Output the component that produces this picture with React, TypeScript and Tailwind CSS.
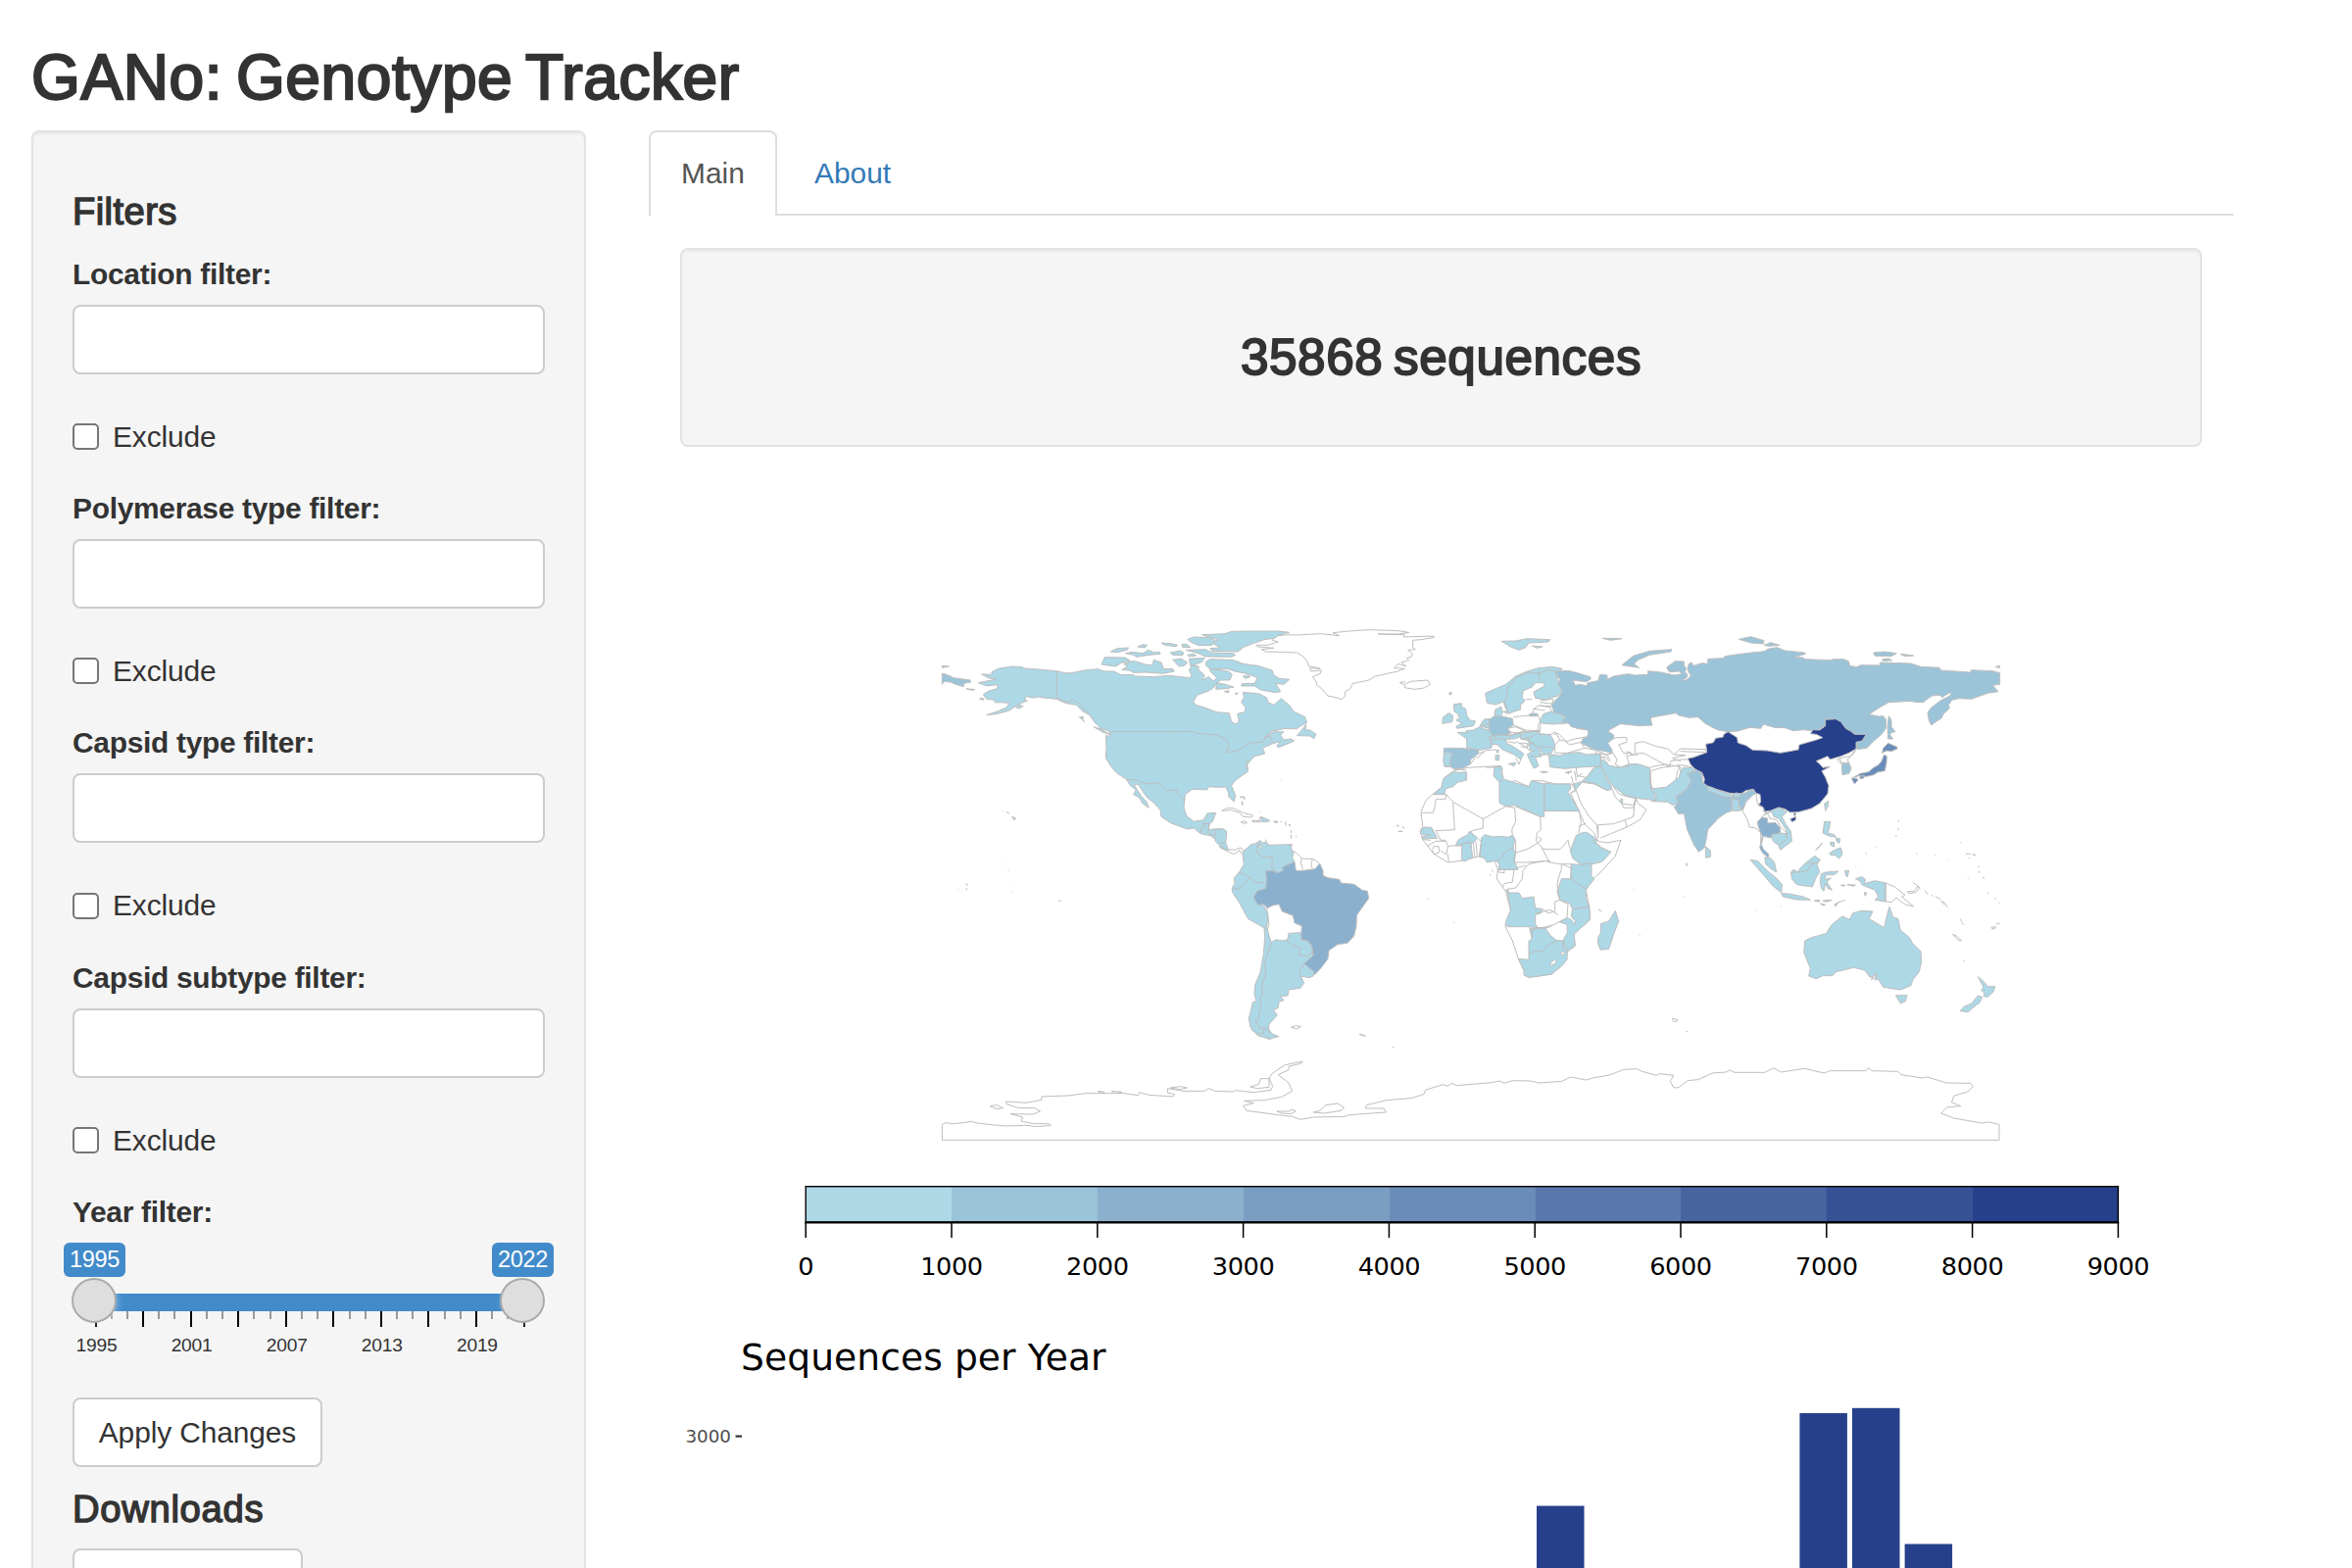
const L = "#add8e6";
const R = "#9cc4d9";
const B = "#8bb0ce";
const J = "#6a8cb9";
const C = "#27408b";
const W = "#ffffff";

type Shape = [fill: string, points: string];
type Region = { transform: string; shapes: Shape[]; lines: string[] };

const northAmerica: Region = {
  transform: "translate(940 620) scale(0.33333)",
  shapes: [
    [L, "415,194 345,188 315,186 310,182 278,180 235,187 215,198 218,205 185,204 205,215 228,220 200,225 175,230 200,240 235,236 232,248 205,256 190,266 200,280 225,283 226,291 245,290 260,292 270,290 262,305 235,317 200,329 235,325 270,315 295,298 312,290 325,285 317,283 322,270 332,275 350,276 358,273 375,276 415,280 440,292 475,298 495,318 515,328 530,350 550,370 575,378 580,394 565,392 567,430 565,460 580,485 600,508 628,525 640,545 658,558 650,572 668,582 678,600 697,613 690,595 675,578 662,560 652,540 665,542 690,580 715,600 732,620 735,640 765,660 815,678 835,675 855,692 885,698 900,708 913,720 915,735 937,745 937,735 930,722 934,685 918,677 905,677 880,680 882,662 892,655 902,628 875,630 865,650 835,655 812,638 804,612 808,572 830,556 875,558 880,548 905,550 932,549 940,565 942,580 958,594 962,575 950,545 960,530 1000,502 998,480 1020,455 1052,447 1045,430 1080,415 1100,410 1088,424 1095,428 1142,408 1132,402 1110,405 1100,390 1110,380 1080,380 1048,400 1075,378 1110,371 1150,371 1165,360 1181,352 1175,335 1155,325 1140,318 1128,300 1102,278 1080,298 1062,290 1058,276 1035,264 985,259 988,275 980,290 993,305 990,320 968,325 973,345 966,357 950,350 943,323 905,320 870,307 840,298 833,287 845,268 880,255 895,245 905,230 918,222 945,222 952,205 940,195 905,190 885,185 885,195 905,215 895,225 880,212 860,222 868,207 848,190 850,180 830,178 820,190 828,210 820,215 760,208 710,212 655,210 650,206 610,205 590,195 560,195 540,188 500,192 460,200 440,200"],
    [L, "872,165 885,158 955,160 985,172 1030,178 1075,192 1078,205 1095,217 1127,220 1110,235 1085,232 1100,257 1085,260 1040,252 1020,240 980,240 982,233 1020,232 1030,215 1000,203 960,195 940,188 885,188 872,178"],
    [L, "620,172 650,163 690,175 708,175 712,160 735,168 742,188 770,187 775,195 740,202 690,198 650,199 640,193 615,190 632,180"],
    [L, "562,152 625,153 640,163 615,168 595,180 552,174"],
    [L, "580,135 600,125 635,123 630,130 600,137"],
    [L, "625,140 645,136 680,140 695,130 712,137 730,136 732,142 690,146 660,151 650,145"],
    [L, "662,120 678,113 692,115 685,123"],
    [L, "735,108 765,110 785,115 780,119 745,115"],
    [L, "762,138 795,132 803,138 800,146 770,145"],
    [L, "770,160 795,156 815,168 805,178 790,180"],
    [L, "820,157 868,154 860,166 825,180"],
    [L, "798,112 812,112 824,122 800,121"],
    [L, "810,130 870,128 890,138 955,140 962,145 950,151 870,150 848,140"],
    [L, "815,145 832,142 842,147 820,150"],
    [L, "860,83 930,80 950,73 1000,72 1095,72 1127,76 1095,84 1082,94 1050,98 1020,108 985,122 970,135 890,133 885,125 915,123 890,107 912,98 880,90"],
    [L, "815,97 835,90 880,92 900,100 890,115 850,116 830,108"],
    [L, "905,230 930,235 957,243 935,248 902,250"],
    [L, "985,210 1000,207 1008,212 992,217"],
    [L, "928,257 943,254 940,261"],
    [L, "960,262 970,262 964,266"],
    [L, "1178,357 1165,375 1150,392 1190,393 1202,401 1209,388 1190,375 1176,374"],
    [L, "528,365 550,372 580,390 555,381"],
    [L, "484,335 497,335 494,342 500,350"],
    [L, "290,305 300,298 312,302 300,309"],
    [L, "178,279 190,278 192,283"],
    [L, "138,248 165,251 155,253"],
    [R, "64,201 85,208 100,215 150,222 152,228 130,232 130,242 105,235 90,228 70,226 64,235"],
    [R, "64,178 85,180 64,184"],
    [L, "278,640 290,645 284,650"],
    [L, "1040,640 1068,652 1058,656 1042,655"],
    [L, "1080,654 1092,655 1085,659"],
    [W, "920,622 935,614 955,614 985,628 1015,636 1012,642 985,640 975,628 950,620"],
    [W, "978,656 990,654 998,658 988,662"],
    [W, "1012,653 1035,652 1038,656 1020,657"],
  ],
  lines: [
    "415,194 415,280",
    "415,278 450,290 465,282 480,290 500,310 515,330",
    "580,380 825,379 850,385 885,388 905,390 935,405 942,420 935,443 965,440 985,428 1010,413 1045,412 1055,398 1068,393 1075,413",
    "628,527 655,527 690,540 725,537 755,560 780,557 790,575 808,587",
    "855,690 858,674 870,672 862,662 882,660",
    "882,662 878,690 892,697 908,692 930,685",
    "912,720 930,722",
    "247,621 249,623", "260,626 270,630", "1035,625 1037,626", "978,578 990,580 990,586", "982,592 985,605",
    "1100,530 1102,530", "1115,655 1118,658", "1125,662 1128,668", "1132,680 1132,690", "1147,701 1149,702",
    "250,785 252,786", "267,802 269,804", "136,845 144,850", "112,862 114,863", "135,862 142,861", "289,857 290,858", "280,871 282,872", "420,898 428,898",
    "1001,467 995,480 1000,495",
  ],
};

const greenland: Region = {
  transform: "translate(1260 630) scale(0.33333)",
  shapes: [
    [W, "120,57 165,53 190,54 262,50 320,56 300,47 350,42 410,38 500,41 533,46 500,51 438,51 520,53 517,60 610,57 610,61 570,68 545,70 545,92 553,98 530,100 545,112 540,121 527,124 533,131 510,138 525,150 500,142 488,155 520,157 495,166 430,180 410,192 360,203 353,220 338,227 338,240 328,251 312,246 285,240 265,217 250,207 250,198 238,182 262,172 265,162 232,165 230,155 262,157 225,148 222,135 210,120 190,108 145,106 95,105 82,98 120,94 70,90 65,85 100,85 133,75 115,70"],
    [W, "505,200 518,196 525,203 540,196 590,192 598,205 580,216 550,220 520,215 522,207"],
    [L, "672,266 690,264 690,270 672,270"],
    [R, "656,231 664,230 660,238"],
  ],
  lines: [],
};

const southAmerica: Region = {
  transform: "translate(1240 800) scale(0.33333)",
  shapes: [
    [L, "85,225 85,207 110,185 125,182 137,172 145,180 155,178 165,187 235,185 232,195 240,210 236,225 243,240 220,262 175,290 160,300 155,325 125,345 150,375 162,400 158,442 145,438 100,412 75,365 52,330 52,317 60,305 58,288 75,268 88,245"],
    [B, "155,267 175,265 190,272 208,265 205,255 243,238 247,265 270,265 306,260 320,243 330,265 330,280 345,287 380,292 385,303 425,307 450,325 466,328 470,350 450,378 433,402 432,435 425,465 405,487 375,491 348,510 345,535 325,562 305,583 270,550 300,525 295,495 280,480 262,475 265,435 243,425 238,403 205,390 195,368 175,372 160,380 148,368 130,370 118,348 128,328 155,320 157,290"],
    [L, "150,440 160,445 165,465 172,485 185,476 205,480 222,476 225,457 262,455 265,478 283,480 295,495 300,525 272,550 285,560 303,575 300,588 288,593 262,588 272,610 260,625 225,630 222,648 200,650 210,662 195,667 193,685 178,692 190,708 165,735 163,750 175,765 195,773 165,780 130,770 108,745 103,718 108,698 115,668 125,665 120,640 122,615 137,580 141,560 148,520 152,470"],
    [L, "0,140 25,137 35,145 32,180 38,195 38,205 15,190 0,175"],
    [W, "232,745 245,740 263,742 250,749"],
    [W, "442,766 452,768 460,772 448,769"],
    [W, "136,186 143,188 141,198 136,196"],
  ],
  lines: [
    "172,485 165,510 152,545 155,580 142,620 145,640 138,660 140,680 130,725 122,727 135,745 165,752 165,765",
    "110,752 125,762 148,765 150,750",
    "215,478 240,495 263,503 255,523 280,527 298,515",
    "272,550 260,570 258,590",
    "158,380 165,430 160,445",
    "135,175 125,200 130,213 145,222 175,225 173,255 190,272",
    "70,270 85,275 105,285 95,300 70,322 55,318",
    "105,285 125,300 152,303",
    "238,205 250,212 265,228 300,230 318,242",
    "265,228 262,240 268,262", "298,230 294,245 298,262",
    "38,200 60,202 78,195 88,207", "38,206 58,215 75,203 83,216", "12,180 28,182",
    "137,101 137,118", "75,41 90,42 89,48", "80,55 84,65", "178,115 192,118", "200,115 204,116", "213,118 217,128", "228,123 230,130", "233,155 232,168", "246,161 249,162", "226,187 234,188", "152,170 158,176",
    "555,126 562,129", "575,130 578,136", "562,145 573,144", "652,351 654,352", "730,423 732,424", "545,805 546,806",
    "840,278 844,279", "848,265 850,268", "163,188 155,176",
  ],
};

const africaEurope: Region = {
  transform: "translate(1400 620) scale(0.33333)",
  shapes: [
    [W, "250,500 290,490 340,487 395,485 400,510 393,530 415,535 440,530 480,548 490,530 520,530 560,540 612,540 622,557 608,568 635,625 650,662 680,690 692,715 720,720 762,712 745,760 705,805 672,835 655,865 665,915 668,955 640,980 618,1000 622,1035 598,1055 585,1090 550,1122 480,1132 465,1110 448,1075 430,1020 408,975 425,930 410,870 382,830 385,800 375,775 345,765 325,762 275,775 232,780 190,755 155,710 147,685 155,670 150,625 165,590 188,570 215,548 222,520"],
    [L, "248,503 265,505 287,503 290,528 262,535 248,548 225,555 222,570 187,571 212,552 218,525"],
    [L, "375,488 395,485 400,495 393,505 403,520 390,535 385,530 372,515"],
    [L, "390,535 403,525 440,537 480,548 488,530 527,540 527,640 515,640 438,605 410,608 390,598"],
    [L, "527,538 560,540 608,540 608,555 600,565 635,623 527,622"],
    [L, "147,688 158,672 182,673 200,706 155,708 155,700 180,697 155,695"],
    [L, "256,728 265,710 290,697 300,685 323,705 310,720 280,722 275,728"],
    [L, "275,722 303,720 308,765 285,776 275,773"],
    [L, "335,705 345,695 370,702 395,700 415,703 430,697 437,712 432,735 438,750 435,775 447,802 388,802 390,785 380,775 352,780 345,768 330,762"],
    [L, "625,697 640,690 658,688 683,705 683,718 700,735 732,748 705,778 675,785 640,787 615,768 607,745"],
    [L, "610,785 640,787 672,782 672,820 680,832 655,862 608,830"],
    [L, "580,830 610,830 655,862 655,890 665,915 615,925 605,905 575,895 567,870"],
    [L, "613,925 665,915 668,955 640,980 618,1000 622,1035 598,1050 590,1035 585,1018 598,995 597,970 573,962 598,950 610,955 620,970 623,960 610,945"],
    [L, "415,873 450,873 460,890 495,885 500,920 520,922 518,935 500,940 500,968 508,980 475,977 430,977 408,972 412,955 425,925"],
    [L, "411,865 417,862 418,873 412,870"],
    [L, "483,985 530,980 545,1003 565,1018 585,1020 598,1050 597,1078 580,1098 550,1122 520,1127 480,1132 465,1125 465,1110 448,1075 480,1078 480,1020 490,1015"],
    [W, "545,1088 560,1078 565,1085 550,1096"],
    [W, "578,1056 588,1052 590,1062 580,1063"],
    [L, "745,928 755,960 740,1000 725,1045 700,1048 692,1030 692,1010 700,995 700,968 725,960"],
    [L, "677,712 683,708 690,712 683,722"],
    // Scandinavia
    [L, "397,103 440,102 475,95 545,98 540,105 480,108 470,122 450,130 425,120"],
    [L, "490,117 522,120 505,124"],
    [R, "706,94 765,95 730,100"],
    [L, "347,262 375,250 410,235 440,210 475,195 510,185 550,181 582,187 575,198 565,200 568,220 573,235 583,255 570,270 530,282 500,277 495,258 528,240 525,230 500,230 490,243 462,255 460,275 468,285 455,298 455,312 435,318 418,325 408,305 402,288 380,297 352,292"],
    [L, "375,325 378,312 395,303 400,322 392,335 378,335"],
    [L, "402,318 415,318 413,325"],
    // British Isles
    [L, "250,297 275,293 273,303 287,310 290,330 300,345 317,348 310,362 260,370 258,363 277,355 258,345 268,337 262,325 252,318"],
    [L, "218,335 235,323 248,330 245,350 215,355"],
    // Iberia, France, Central Europe
    [R, "220,430 270,430 327,436 325,447 302,465 300,480 280,490 252,495 240,487 222,487 220,462"],
    [L, "222,442 245,445 240,465 240,487 222,485 218,468"],
    [L, "262,382 290,382 288,377 310,375 330,365 345,372 368,378 370,392 358,400 368,420 365,430 330,436 290,430 290,402"],
    [L, "330,362 343,342 365,340 358,370"],
    [R, "358,345 372,333 395,332 430,340 433,360 415,370 425,385 405,392 370,392 358,375"],
    [R, "480,328 490,323 508,325 505,332 482,332"],
    [L, "360,395 385,390 425,392 440,383 455,385 455,395 435,402 410,403 412,415 440,430 465,448 455,465 435,450 400,435 385,420 368,418 362,405"],
    [L, "418,478 440,475 435,485"],
    [L, "378,452 390,452 388,468 378,467"],
    [L, "380,437 388,436 385,446"],
    [L, "455,385 500,378 515,375 510,388 545,388 555,405 560,422 550,445 525,450 512,430 500,430 480,420 480,407 455,402"],
    [L, "478,420 495,415 510,432 520,455 500,458 510,485 495,492 482,465 475,450 490,440"],
    [L, "515,502 538,503 525,506"],
    [R, "592,505 612,500 602,508"],
    [L, "515,345 525,325 550,318 580,325 592,345 590,355 550,357 513,353"],
    // Middle East
    [L, "542,460 550,450 575,453 600,445 635,443 655,450 700,447 700,485 650,488 625,490 590,493 545,488"],
    [L, "537,450 555,450 545,460"],
    [L, "657,520 682,488 700,485 712,495 715,520 735,550 722,560 685,540 645,532 622,560 618,540 640,533"],
    [L, "700,465 715,470 725,483 760,490 785,480 810,478 850,490 855,545 870,590 820,585 775,575 740,548 725,530 712,505 702,490"],
    [L, "762,585 768,587 765,600 760,597"],
  ],
  lines: [
    "188,572 227,572 248,595 340,647 410,608", "227,572 225,587 195,587 192,610 187,628 152,628",
    "248,597 253,680 198,683", "340,647 340,675 310,682 295,688", "410,608 437,613 440,655 428,680 430,697", "515,640 517,680 505,690 503,715",
    "515,640 438,608", "527,622 635,623", "635,625 640,658 632,690", "655,660 632,670",
    "430,697 440,712 440,750 475,740 505,722 520,710 510,702", "503,715 525,740 575,740 590,725 600,712 607,740",
    "520,735 535,765 545,780 575,785 610,785", "440,750 435,780 470,780 545,775", "545,780 530,775 480,785 462,805 460,830 440,858 415,862",
    "388,802 435,802 430,840 405,845 400,855", "388,800 388,810 405,812 405,803", "435,802 450,795 470,790",
    "580,785 580,800 570,830 567,850 575,895 560,900 560,930 540,935 520,922", "575,895 600,908 597,950 573,962", "500,937 545,925 570,940",
    "508,980 540,980 573,962", "483,985 530,978 550,972", "480,980 490,985 490,1015", "413,977 430,977",
    "480,1058 500,1052 520,1052 545,1030 570,1018", "585,1020 585,1045", "610,785 610,830", "583,785 613,800",
    "195,680 210,712 225,712 232,730 228,755 210,745", "170,730 195,715 225,715", "185,740 190,730 205,732 205,750 190,755 185,742",
    "232,730 275,728", "232,755 235,778", "310,720 315,765", "318,715 322,762", "325,708 335,715 328,762", "155,710 180,712",
    "430,735 405,750 398,765 380,775", "692,705 692,665 740,662 775,650 800,640 803,610", "775,650 780,672 700,705",
    "645,535 680,540 720,560 735,555 745,580 765,600 800,605 808,583 815,600 840,618 820,650 780,672", "740,550 755,570 780,578 808,585 803,610",
    "608,568 625,560 640,600 665,640 688,665 692,700", "765,600 770,613 800,613 808,585",
    "685,718 700,733 730,748", "527,540 527,622", "290,503 287,530",
    // Nordic and Baltic borders
    "418,322 405,288 415,270 412,250 440,215 480,198 510,202 515,222", "510,202 540,190 575,198", "512,195 515,205",
    "515,285 555,280 552,295 515,290", "550,290 555,302 515,300", "493,312 510,300 545,305 550,318", "492,320 495,310 530,315", "470,282 490,280",
    // Central European borders
    "433,335 480,330 510,332 515,350 515,378 470,375 435,360", "415,370 440,365 470,378 440,385 418,378", "440,385 460,380 510,380",
    "510,355 505,385", "590,355 615,352 625,370 662,375", "510,385 545,390 560,380 575,405", "555,388 570,385 595,410 620,402 660,395",
    "560,422 560,445 600,445 650,430 640,412 605,420 590,408 575,405 560,420", "480,405 505,428", "510,425 550,428", "475,395 485,420",
    "440,410 470,425 485,440", "450,415 475,415 475,430 455,425", "415,410 440,415", "385,400 410,405", "365,405 385,402", "370,392 380,400",
    "358,355 335,362", "412,392 455,385", "425,392 420,402", "455,402 480,400 500,388", "480,432 495,440", "510,450 535,450", "485,455 500,455",
    "288,497 250,495", "302,480 320,450 350,437 380,435", "395,487 350,490",
    "320,462 345,440", "455,465 450,480 440,460",
    // Caucasus and Levant
    "650,430 680,435 718,450 733,447", "680,440 700,455 715,465", "700,447 720,450 730,470", "700,460 715,455 725,470", "625,490 628,515 657,520 680,490",
    "620,500 625,530", "610,515 618,545", "625,520 645,508", "850,490 865,485 900,480 945,488 935,500 930,530 900,555 855,555 855,545",
    // offshore specks
    "75,668 82,669", "93,672 98,674", "80,685 94,686", "368,803 370,807", "361,817 362,819", "172,891 174,892", "250,963 251,964", "692,924 704,930", "818,1002 821,1003", "800,861 802,862", "953,885 955,886", "963,782 963,790",
  ],
};

const asia: Region = {
  transform: "translate(1640 620) scale(0.33333)",
  shapes: [
    [R, "-150,195 -118,193 -80,203 -52,212 -50,219 -65,227 -105,222 -98,238 -82,235 -62,240 -60,230 -28,224 -22,205 0,207 0,220 20,210 65,203 85,207 125,205 125,194 165,198 205,207 228,203 222,195 190,197 182,183 208,164 235,165 235,178 243,187 237,197 246,205 243,215 228,222 243,222 256,208 248,195 247,182 250,172 258,168 265,178 290,170 308,172 308,157 358,155 360,149 400,143 450,137 480,134 495,126 520,122 545,132 605,138 607,142 570,152 600,153 605,158 690,161 690,158 725,158 740,165 742,178 765,182 775,176 835,177 835,168 930,171 960,181 1018,184 1020,192 1100,197 1110,199 1115,191 1180,194 1202,200 1202,235 1180,238 1197,257 1165,262 1115,280 1078,278 1055,283 1045,298 1048,308 1030,325 1022,340 1008,348 992,360 985,345 981,322 990,308 1020,285 1045,272 1057,262 1045,262 1025,275 1020,268 995,270 975,283 970,289 945,290 930,286 862,290 835,305 802,327 830,333 845,332 853,342 853,370 840,388 820,405 795,430 765,434 762,412 780,408 793,388 757,388 745,378 728,372 715,352 700,343 670,342 667,362 650,372 640,378 600,374 570,377 540,367 515,368 478,357 470,370 437,367 400,378 368,380 340,375 325,368 300,355 278,335 250,337 220,330 210,323 170,330 133,337 135,350 138,360 100,362 60,358 40,356 15,370 2,378 20,390 20,400 2,415 15,435 13,447 -5,440 -40,435 -80,415 -75,402 -60,395 -58,375 -110,365 -120,352 -140,350 -128,338 -137,328 -162,320 -170,300 -160,285 -145,270 -137,255 -150,235 -145,220 -160,200"],
    [R, "45,176 80,148 130,133 198,128 195,135 130,145 95,160 82,172 98,184"],
    [R, "403,97 440,89 480,101 478,111 440,108"],
    [R, "480,115 500,107 528,115 495,118"],
    [R, "815,138 850,135 886,140 870,149 820,148"],
    [R, "898,142 938,147 910,149"],
    [R, "842,158 862,156 872,162 845,163"],
    [R, "1188,182 1202,178 1202,184"],
    [R, "862,332 870,345 870,365 882,380 872,382 865,388 875,402 860,402 858,365"],
    [C, "247,462 265,458 305,443 302,418 325,413 332,400 355,396 357,388 370,380 398,398 400,414 425,422 445,436 490,438 530,445 585,435 588,420 640,405 660,398 640,388 622,386 630,374 650,375 668,362 668,343 700,341 716,350 730,370 745,378 757,388 793,388 780,408 762,412 762,432 740,445 715,455 682,465 675,455 640,470 650,478 660,490 682,487 657,500 668,520 678,545 675,570 650,600 625,615 585,626 560,627 545,617 525,612 500,622 480,625 478,612 462,605 470,595 468,572 455,568 448,556 425,560 410,570 375,568 320,552 295,540 298,525 290,505 270,495 255,480"],
    [C, "560,647 578,640 577,650 566,656"],
    [C, "572,628 577,628 575,638 571,635"],
    [R, "245,508 275,498 290,508 292,535 305,545 310,558 380,582 385,570 420,568 445,556 455,568 425,590 415,620 408,612 400,595 380,600 382,622 365,628 340,645 308,680 303,710 298,735 280,748 265,725 245,680 235,630 218,632 205,610 215,600 210,578 240,560 258,530"],
    [L, "305,547 320,550 345,562 378,570 378,582 345,575 310,560"],
    [L, "385,572 395,567 410,572 405,580 388,580"],
    [L, "380,585 405,590 402,612 412,618 405,622 385,622"],
    [L, "302,732 315,745 313,765 302,763"],
    [L, "150,590 150,575 133,555 180,550 200,535 220,520 225,500 232,490 260,490 270,498 245,508 258,530 240,560 210,578 218,598 200,605 185,595 135,593"],
    [R, "718,480 740,475 747,492 740,508 720,512"],
    [J, "842,445 845,430 860,415 888,427 888,432 870,440 855,438"],
    [J, "848,450 856,455 855,475 850,500 830,503 815,512 795,517 770,515 750,522 775,508 800,503 815,490 830,482 840,470"],
    [J, "748,522 765,523 768,528 757,540"],
    [J, "772,518 787,514 785,522 775,524"],
    [L, "665,600 678,592 675,610 668,622"],
    [B, "460,655 475,642 490,645 492,660 515,658 530,675 530,690 505,695 502,705 478,700 472,725 478,740 495,755 492,765 475,750 467,735 475,700 470,690 462,668"],
    [L, "502,622 525,612 550,625 535,640 545,660 562,685 565,715 530,742 525,728 550,700 548,680 525,645 510,640"],
    [L, "502,697 525,690 550,692 548,710 525,728 508,715"],
  ],
  lines: [
    // Central Asia
    "5,405 30,398 60,398 60,412 35,420 50,445 75,445 70,452 60,455 68,485 40,488 25,480 30,465 15,440",
    "85,448 85,415 110,410 150,425 185,432 205,450 215,440 225,432 302,434", "85,448 110,445 130,455 165,475 190,487 195,470 225,465 248,465",
    "70,452 95,450", "190,487 165,490 133,500 130,530 135,553", "190,487 225,482 260,488", "205,450 240,452 210,458 200,462 225,470", "225,440 300,443",
    "218,480 225,500", "60,440 80,450", "55,452 70,440",
    "762,432 745,455 715,460 705,465 712,475 740,475 735,465 752,450 762,435", "718,480 712,460",
    // Indochina
    "408,612 430,650 435,672 455,675 470,690", "455,568 460,600 478,612 485,630 500,625", "485,630 470,645", "490,628 498,645 520,650 530,670 548,688 545,695",
    "415,620 425,595 440,580", "378,582 380,600", "300,434 302,440", "480,635 505,622", "470,690 470,720",
    // specks
    "892,650 892,656", "892,676 890,682", "882,700 884,698", "1080,718 1082,719", "823,735 825,736", "947,754 949,755", "1003,758 1005,758", "1100,754 1112,755", "1120,757 1128,758", "791,752 793,753",
  ],
};

const oceania: Region = {
  transform: "translate(1700 800) scale(0.33333)",
  shapes: [
    [L, "122,192 135,203 137,222 122,226"],
    [L, "302,225 318,225 332,240 338,270 322,260 305,245"],
    [L, "258,232 280,235 315,270 340,290 355,308 353,333 325,310 300,280"],
    [L, "353,335 375,336 420,345 442,355 400,354 358,345"],
    [L, "383,270 390,262 405,270 410,258 430,240 455,220 472,232 462,245 470,270 460,285 448,315 400,308 385,290"],
    [L, "475,275 490,270 528,267 515,278 490,278 485,292 505,288 492,300 508,325 495,320 488,303 483,328 476,320 472,300"],
    [L, "548,265 560,265 555,285 550,280"],
    [L, "535,310 548,309 545,313"], [L, "555,308 580,309 575,313"], [L, "454,357 470,355 468,361"], [L, "480,357 508,355 490,361"], [L, "472,366 488,370 480,372"], [L, "515,370 528,362 520,374"],
    [L, "580,290 600,284 610,292 608,305 640,296 672,303 672,360 640,355 650,345 640,325 615,315 600,308 595,298"],
    [L, "607,332 614,333 610,343"],
    [L, "485,115 503,115 500,135 495,150 515,155 520,163 495,158 480,150"],
    [L, "520,165 533,168 530,182 522,175"], [L, "502,178 515,178 515,192 505,188"], [L, "500,212 520,200 535,195 540,215 530,228 518,218 505,218"],
    [L, "458,203 478,180 472,190"],
    [L, "425,480 445,470 490,458 508,430 540,405 562,415 572,395 600,388 633,390 622,413 668,440 677,400 684,376 695,408 710,412 718,448 745,470 755,488 780,512 782,545 775,575 755,600 750,617 718,630 690,626 665,622 650,598 640,600 645,585 625,592 608,570 575,562 520,575 510,587 480,587 460,596 437,588 442,565 430,535 422,515"],
    [W, "628,600 642,578 640,592"],
    [L, "703,647 738,647 733,665 718,672"],
    [L, "955,590 970,602 985,620 1007,620 1003,635 985,652 972,650 975,640 965,632 972,622"],
    [L, "955,648 968,652 960,670 945,680 925,698 900,695 912,682 935,672"],
    [W, "672,303 700,315 732,340 722,345 758,375 730,368 705,348 690,362 672,360"],
    [W, "738,330 760,328 770,313 775,318 765,332 745,335"],
    [W, "877,460 890,465 905,480 895,478"],
    [W, "20,718 36,722 32,728 22,726"],
    [W, "996,438 1010,438 1005,444 998,443"],
  ],
  lines: [
    "385,270 410,270 435,265 440,250 455,242 467,242", "430,240 455,242", "757,303 770,310 778,320", "792,326 802,338", "812,340 818,343", "825,345 840,352", "840,355 852,370", "848,358 862,378",
    "900,412 905,420", "905,422 910,430", "1010,430 1022,426", "528,362 548,356", "672,303 672,360", "704,160 706,156", "612,212 614,213", "644,194 645,195", "766,213 768,214", "824,217 826,218", "866,232 868,233", "902,179 904,180", "918,213 922,214", "938,216 947,217", "926,226 929,226",
    "956,251 957,255", "958,266 958,272", "970,285 974,291", "904,285 905,286", "925,288 927,289", "985,330 988,335", "1005,350 1010,352", "1019,362 1022,365", "910,541 914,542", "62,757 66,758", "53,346 55,347", "273,390 275,391", "351,374 353,375", "62,242 64,252", "581,252 583,253",
  ],
};

const antarctica: Region = {
  transform: "translate(940 1060) scale(0.71429 0.33333)",
  shapes: [
    [W, "30,310 30,262 35,257 45,260 60,257 72,253 80,258 100,263 120,267 150,265 165,269 185,265 183,260 160,260 143,252 145,240 128,230 160,231 170,222 162,212 138,211 122,200 121,192 150,196 172,187 172,177 210,174 235,167 290,167 310,173 312,164 325,172 360,177 362,170 352,165 352,152 375,160 405,160 411,152 420,160 445,162 450,158 475,164 500,157 502,145 497,120 502,105 520,80 545,69 543,75 525,85 525,95 510,110 525,135 530,160 515,178 490,188 461,190 475,197 460,205 465,220 510,233 530,238 542,247 560,240 605,238 612,233 664,225 661,213 635,213 636,203 665,188 700,182 718,170 720,157 745,140 752,145 758,136 765,143 815,134 826,129 833,136 845,128 870,129 882,135 915,130 928,117 950,126 960,120 985,110 1003,94 1022,92 1030,100 1050,112 1055,107 1075,112 1070,130 1075,150 1082,149 1095,128 1110,125 1130,105 1150,102 1155,96 1162,103 1205,103 1218,89 1228,102 1262,91 1290,105 1298,98 1350,98 1353,88 1358,98 1395,100 1400,110 1430,120 1437,117 1465,135 1498,136 1503,145 1495,162 1475,175 1472,195 1485,206 1465,210 1457,228 1475,243 1515,258 1525,255 1540,262 1540,310"],
    [W, "470,147 482,140 485,122 497,122 497,148 480,152"],
    [W, "560,225 570,220 578,203 595,198 604,210 600,220 575,228"],
    [W, "508,222 525,222 530,216 535,222 528,230 515,228"],
    [W, "98,206 108,203 117,212 108,215"],
    [W, "252,160 262,163 258,166"], [W, "272,160 287,163 275,167"], [W, "356,150 370,146 380,150 370,155"],
  ],
  lines: ["495,0 500,1", "673,25 675,26"],
};

const regions = [greenland, northAmerica, southAmerica, africaEurope, asia, oceania, antarctica];

const scaleColors = ["#add8e6", "#9cc4d9", "#8bb0ce", "#7a9dc2", "#6a8cb9", "#5977ac", "#4865a0", "#375195", "#27408b"];

const bars = [
  { x: 1568, w: 48.5, y: 1536.6 },
  { x: 1836.4, w: 48.5, y: 1442 },
  { x: 1890, w: 48.5, y: 1436.8 },
  { x: 1943.6, w: 48.5, y: 1575.5 },
];

const axisLeft = 822.2;
const axisStep = 148.8;

function WorldMap() {
  return (
    <g strokeWidth="1" stroke="#bebebe" strokeLinejoin="round">
      {regions.map((region, i) => (
        <g key={i} transform={region.transform}>
          {region.shapes.map(([fill, points], j) => (
            <polygon key={j} points={points} fill={fill} vectorEffect="non-scaling-stroke" />
          ))}
          {region.lines.map((points, j) => (
            <polyline key={j} points={points} fill="none" vectorEffect="non-scaling-stroke" />
          ))}
        </g>
      ))}
    </g>
  );
}

function Charts() {
  return (
    <svg
      className="block h-[1144px] w-[1640px] font-['DejaVu_Sans',sans-serif]"
      viewBox="662 456 1640 1144"
    >
      <WorldMap />
      {scaleColors.map((color, i) => (
        <rect key={color} x={axisLeft + i * axisStep} y="1211" width={axisStep + 0.3} height="36" fill={color} />
      ))}
      <rect x={axisLeft} y="1210.7" width={axisStep * 9} height="36.5" fill="none" stroke="#000" strokeWidth="1.4" />
      <path d={`M${axisLeft - 0.7} 1247.4H${axisLeft + axisStep * 9 + 0.7}`} stroke="#000" strokeWidth="2.2" />
      {Array.from({ length: 10 }, (_, i) => (
        <g key={i}>
          <path d={`M${axisLeft + i * axisStep} 1247V1263`} stroke="#000" strokeWidth="1.5" />
          <text x={axisLeft + i * axisStep} y="1301" fontSize="25.6" textAnchor="middle" letterSpacing="-0.4">
            {i * 1000}
          </text>
        </g>
      ))}
      <text x="756" y="1397.6" fontSize="37.6" letterSpacing="0.1">Sequences per Year</text>
      <text x="746" y="1472.3" fontSize="18.3" textAnchor="end" fill="#4d4d4d">3000</text>
      <path d="M750.5 1465.6H757" stroke="#333" strokeWidth="2.2" />
      {bars.map((bar) => (
        <rect key={bar.x} x={bar.x} y={bar.y} width={bar.w} height={1600 - bar.y} fill="#27408b" />
      ))}
    </svg>
  );
}

function Filter({ label }: { label: string }) {
  return (
    <div className="h-[239.4px]">
      <div className="mb-[10px] h-[43px] font-bold leading-[43px] tracking-[-0.28px]">{label}</div>
      <div className="h-[71px] rounded-[8px] border-2 border-[#ccc] bg-white" />
      <div className="mt-[42px] flex h-[43px] items-center gap-[14px]">
        <div className="mt-px size-[27px] rounded-[5px] border-2 border-[#767676] bg-white" />
        <div className="leading-[43px] tracking-[-0.1px]">Exclude</div>
      </div>
    </div>
  );
}

function YearSlider() {
  const ticks = Array.from({ length: 28 }, (_, i) => i);
  const years = [1995, 2001, 2007, 2013, 2019];
  return (
    <div className="relative h-[168px]">
      <div className="absolute left-[23px] top-[62px] h-[18px] w-[437px] bg-[#428bca]" />
      {ticks.map((i) => (
        <div
          key={i}
          className={
            i % 3 === 0
              ? "absolute top-[80px] h-[16px] w-[2px] bg-black"
              : "absolute top-[80px] h-[8px] w-[2px] bg-[#999]"
          }
          style={{ left: 22.5 + i * 16.19 }}
        />
      ))}
      {years.map((year, i) => (
        <div
          key={year}
          className="absolute top-[103px] w-[60px] text-center text-[19.2px] leading-[24px] tracking-[-0.2px]"
          style={{ left: -5.5 + i * 97.1 }}
        >
          {year}
        </div>
      ))}
      <div className="absolute left-[-1px] top-[46px] size-[46px] rounded-full border-2 border-[#ababab] bg-[#dedede] shadow-[2px_2px_6px_rgba(255,255,255,0.3)]" />
      <div className="absolute left-[436px] top-[46px] size-[46px] rounded-full border-2 border-[#ababab] bg-[#dedede] shadow-[2px_2px_6px_rgba(255,255,255,0.3)]" />
      <div className="absolute left-[-9px] top-[10px] h-[35px] w-[63px] rounded-[6px] bg-[#428bca] text-center text-[23.5px] leading-[35px] tracking-[-0.3px] text-white">
        1995
      </div>
      <div className="absolute left-[428px] top-[10px] h-[35px] w-[63px] rounded-[6px] bg-[#428bca] text-center text-[23.5px] leading-[35px] tracking-[-0.3px] text-white">
        2022
      </div>
    </div>
  );
}

export default function App() {
  return (
    <div className="h-[1600px] w-[2400px] overflow-hidden bg-white pl-8 pt-[43px] font-['Liberation_Sans',Arial,sans-serif] text-[29.9px] text-[#333]">
      <h1 className="h-[89.5px] text-[64px] leading-[73px] tracking-[0.6px] [word-spacing:-4.5px] [-webkit-text-stroke:2.3px_#333]">
        GANo: Genotype Tracker
      </h1>
      <div className="flex items-start">
        <aside className="h-[1600px] w-[566px] shrink-0 rounded-[8px] border-2 border-[#e3e3e3] bg-[#f5f5f5] px-[40px] pt-[60px] shadow-[inset_0_2px_2px_rgba(0,0,0,0.05)]">
          <h4 className="mb-[21px] h-[42px] text-[38.2px] leading-[42px] tracking-[0.4px] [-webkit-text-stroke:1.4px_#333]">Filters</h4>
          <Filter label="Location filter:" />
          <Filter label="Polymerase type filter:" />
          <Filter label="Capsid type filter:" />
          <Filter label="Capsid subtype filter:" />
          <div className="h-[43px] font-bold leading-[43px] tracking-[-0.28px]">Year filter:</div>
          <YearSlider />
          <div className="h-[71px] w-[255px] rounded-[8px] border-2 border-[#ccc] bg-white text-center leading-[67px] tracking-[-0.1px]">
            Apply Changes
          </div>
          <h4 className="mt-[22px] h-[42px] text-[38.2px] leading-[42px] tracking-[0.7px] [-webkit-text-stroke:1.4px_#333]">Downloads</h4>
          <div className="mt-[19px] h-[71px] w-[235px] rounded-[8px] border-2 border-[#ccc] bg-white" />
        </aside>
        <main className="ml-[64px] w-[1640px] shrink-0">
          <div className="flex h-[87px] w-[1617px] border-b-2 border-[#ddd]">
            <div className="h-[87px] w-[131px] rounded-t-[8px] border-2 border-b-0 border-[#ddd] bg-white text-center leading-[84px] text-[#555]">
              Main
            </div>
            <div className="ml-[38px] leading-[88px] text-[#337ab7]">About</div>
          </div>
          <div className="ml-[32px] mt-[33px] h-[203px] w-[1553px] rounded-[8px] border-2 border-[#e3e3e3] bg-[#f5f5f5] pt-[81px] text-center text-[51.2px] leading-[57px] tracking-[0.6px] shadow-[inset_0_2px_2px_rgba(0,0,0,0.05)] [word-spacing:-4px] [-webkit-text-stroke:1.9px_#333]">
            35868 sequences
          </div>
          <Charts />
        </main>
      </div>
    </div>
  );
}
